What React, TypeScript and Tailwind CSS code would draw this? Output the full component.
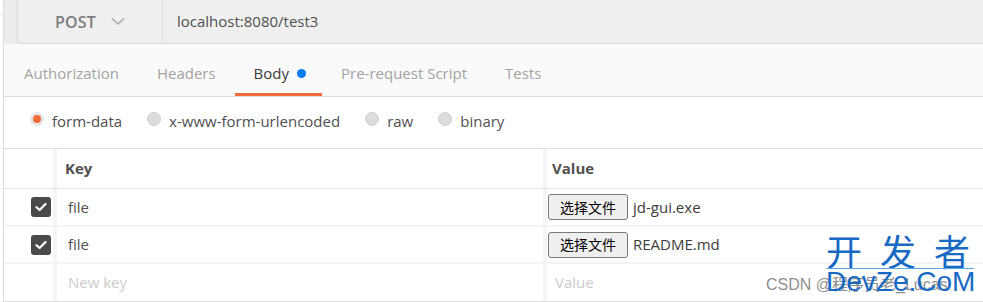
import React from 'react';

const font = { fontFamily: '"Open Sans", "Noto Sans CJK SC", sans-serif' };

const tabs = ['Authorization', 'Headers', 'Body', 'Pre-request Script', 'Tests'];
const bodyTypes = ['form-data', 'x-www-form-urlencoded', 'raw', 'binary'];
const rows = [
    { key: 'file', file: 'jd-gui.exe', h: 'h-[38px]' },
    { key: 'file', file: 'README.md', h: 'h-[37px]' },
];

function Check() {
    return (
        <div className="w-5 h-5 rounded-[3px] bg-[#4a4a4a] flex items-center justify-center">
            <svg width="12" height="10" viewBox="0 0 12 10">
                <path d="M1.5 5.2 L4.6 8 L10.5 2" fill="none" stroke="#fff" strokeWidth="2.2" strokeLinecap="round" strokeLinejoin="round" />
            </svg>
        </div>
    );
}

export default function App() {
    return (
        <div className="w-[983px] h-[302px] bg-white relative overflow-hidden flex" style={font}>
            {/* left rail */}
            <div className="w-[4px] border-r border-[#dcdcdc] flex flex-col">
                <div className="h-[15px] border-b border-[#e4e4e4]" />
            </div>

            <div className="flex-1 flex flex-col">
                {/* url bar */}
                <div className="h-[44px] bg-gradient-to-r from-[#ececec] to-[#f8f8f8] pl-[14px] flex">
                    <div className="flex-1 flex bg-[#efefef] border-b border-[#d9d9d9] rounded-bl-[4px] shadow-[-1px_0_2px_rgba(0,0,0,0.08)]">
                        <div className="w-[145px] border-r border-[#dcdcdc] flex items-center pl-[37px] gap-[15px]">
                            <span className="text-[16px] font-semibold text-[#7d7d7d] tracking-[0.2px]">POST</span>
                            <svg width="14" height="9" viewBox="0 0 14 9">
                                <path d="M1 1.5 L7 7 L13 1.5" fill="none" stroke="#a8a8a8" strokeWidth="1.6" />
                            </svg>
                        </div>
                        <div className="flex items-center pl-[14px] text-[15px] text-[#505050] -mt-[1px]">localhost:8080/test3</div>
                    </div>
                </div>

                {/* tabs */}
                <div className="h-[53px] bg-[#fafafa] border-b border-[#dedede] flex items-stretch pl-[1px]">
                    {tabs.map((t) =>
                        t === 'Body' ? (
                            <div key={t} className="pl-[19px] pr-[16px] pt-[10px] flex items-center gap-[8px] text-[15px] text-[#3a3a3a] border-b-[3px] border-[#f26b3a]">
                                {t}
                                <span className="w-[9px] h-[9px] rounded-full bg-[#097bed]" />
                            </div>
                        ) : (
                            <div key={t} className="px-[19px] pt-[7px] flex items-center text-[15px] text-[#a3a3a3]">
                                {t}
                            </div>
                        )
                    )}
                </div>

                {/* body type radios */}
                <div className="h-[52px] border-b border-[#dedede] flex items-center pl-[26px] pb-[3px] text-[15px] text-[#505050]">
                    {bodyTypes.map((b, i) => (
                        <div key={b} className="flex items-center mr-[25px] gap-[8px]">
                            {i === 0 ? (
                                <span className="w-[14px] h-[14px] rounded-full bg-[#f26b3a] border-[3px] border-[#e6e6e6] -mt-[4px]" />
                            ) : (
                                <span className="w-[14px] h-[14px] rounded-full bg-[#dcdcdc] border border-[#cfcfcf] -mt-[4px]" />
                            )}
                            <span>{b}</span>
                        </div>
                    ))}
                </div>

                {/* table */}
                <div className="flex-1 flex flex-col border-b border-[#dedede]">
                    <div className="h-[40px] flex border-b border-[#e2e2e2] text-[15px] font-bold text-[#505050]">
                        <div className="w-[53px] border-r-[4px] border-[#f5f5f5]" />
                        <div className="w-[490px] border-r-[4px] border-[#f5f5f5] flex items-center pl-[8px]">Key</div>
                        <div className="flex-1 flex items-center pl-[5px]">Value</div>
                    </div>
                    {rows.map((r, i) => (
                        <div key={i} className={`${r.h} flex border-b-[2px] border-[#f3f3f3] text-[15px] text-[#505050]`}>
                            <div className="w-[53px] border-r-[4px] border-[#f5f5f5] flex items-center justify-end pr-[2px]">
                                <Check />
                            </div>
                            <div className="w-[490px] border-r-[4px] border-[#f5f5f5] flex items-center pl-[11px]">{r.key}</div>
                            <div className="flex-1 flex items-center pl-[1px] gap-[5px]">
                                <button className="h-[26px] w-[80px] bg-[#efefef] border border-[#7a7a7a] rounded-[3px] text-[14px] text-black" style={{ fontFamily: '"Noto Sans CJK SC", sans-serif' }}>
                                    选择文件
                                </button>
                                <span className="text-[#3c3c3c]">{r.file}</span>
                            </div>
                        </div>
                    ))}
                    <div className="flex-1 flex text-[15px] text-[#cccccc]">
                        <div className="w-[53px] border-r-[4px] border-[#f5f5f5]" />
                        <div className="w-[490px] border-r-[4px] border-[#f5f5f5] flex items-center pl-[11px]">New key</div>
                        <div className="flex-1 flex items-center pl-[8px]">Value</div>
                    </div>
                </div>
            </div>

            {/* watermark */}
            <div className="absolute left-[766px] top-[273px] text-[16px] text-[#8f8f8f] whitespace-nowrap" style={{ fontFamily: '"Liberation Sans", "Noto Sans CJK SC", sans-serif' }}>
                CSDN @程序员老_Lucas
            </div>
            <div className="absolute left-[826px] top-[232px] w-[148px] flex flex-col text-[#1769c4] whitespace-nowrap">
                <div className="text-[36px] leading-[36px] tracking-[18px]" style={{ fontFamily: '"Noto Sans CJK SC", sans-serif' }}>开发者</div>
                <div className="w-full h-[1px] bg-[#5aa7e6]" />
                <div className="text-[28px] leading-[26px]" style={{ fontFamily: '"Liberation Sans", sans-serif' }}>DevZe.CoM</div>
            </div>
        </div>
    );
}
